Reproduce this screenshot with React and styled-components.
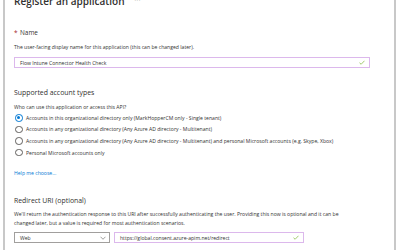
import React from "react";
import styled, { createGlobalStyle } from "styled-components";

const GlobalStyle = createGlobalStyle`
  html, body {
    margin: 0;
    padding: 0;
    background: #fff;
    overflow: hidden;
  }
  body {
    font-family: "Open Sans", "Noto Sans", sans-serif;
    color: #323130;
  }
`;

const Blade = styled.div`
  box-sizing: border-box;
  width: 393px;
  height: 250px;
  margin-left: 3px;
  border-left: 2px solid #c8c8c8;
  border-right: 2px solid #c8c8c8;
  padding-left: 9px;
  overflow: hidden;
`;

const TitleRow = styled.div`
  display: flex;
  align-items: center;
  gap: 10px;
  height: 12px;
  margin-top: -5px;
`;

const Title = styled.h1`
  margin: 0;
  font-size: 10px;
  line-height: 12px;
  font-weight: 600;
  color: #323130;
`;

const More = styled.span`
  font-size: 6px;
  color: #8a8886;
  letter-spacing: 0.5px;
  margin-top: -3px;
`;

const FieldLabel = styled.div`
  margin-top: 22px;
  font-size: 6.4px;
  line-height: 8px;
  font-weight: 400;
  color: #323130;
`;

const Required = styled.span`
  color: #a4262c;
  margin-right: 2.5px;
`;

const Help = styled.div`
  margin-top: ${(p) => p.$top || 0}px;
  font-size: 5.1px;
  line-height: ${(p) => p.$lh || 8}px;
  color: #323130;
  white-space: nowrap;
`;

const Input = styled.div`
  box-sizing: border-box;
  display: flex;
  align-items: center;
  justify-content: space-between;
  width: ${(p) => p.$width}px;
  height: 11px;
  margin-top: ${(p) => p.$top || 0}px;
  padding: 0 4px 0 5px;
  border: 1px solid #dcb8ec;
  font-size: 5.1px;
  color: #323130;
`;

const SectionTitle = styled.h2`
  margin: ${(p) => p.$top}px 0 0;
  font-size: 6.9px;
  line-height: 9px;
  font-weight: 400;
  color: #323130;
`;

const RadioList = styled.div`
  display: flex;
  flex-direction: column;
  margin-top: 1px;
`;

const RadioRow = styled.label`
  display: flex;
  align-items: center;
  gap: 3.5px;
  height: 11.6px;
  padding-left: 1px;
  font-size: 5.1px;
  color: #323130;
  white-space: nowrap;
`;

const RadioCircle = styled.span`
  box-sizing: border-box;
  flex: none;
  display: flex;
  align-items: center;
  justify-content: center;
  width: 7.5px;
  height: 7.5px;
  border-radius: 50%;
  border: 0.8px solid ${(p) => (p.$checked ? "#0078d4" : "#605e5c")};
  &::after {
    content: "";
    width: 3.4px;
    height: 3.4px;
    border-radius: 50%;
    background: ${(p) => (p.$checked ? "#0078d4" : "transparent")};
  }
`;

const Link = styled.a`
  display: block;
  margin-top: 11px;
  font-size: 5.1px;
  line-height: 8px;
  color: #0078d4;
  text-decoration: none;
`;

const UriRow = styled.div`
  display: flex;
  gap: 4px;
  margin-top: 4.5px;
`;

const Select = styled.div`
  box-sizing: border-box;
  display: flex;
  align-items: center;
  justify-content: space-between;
  width: 96px;
  height: 11px;
  padding: 0 3px 0 5px;
  border: 1px solid #a19f9d;
  font-size: 5.1px;
  color: #323130;
`;

const Check = () => (
  <svg width="6" height="5" viewBox="0 0 12 10">
    <path d="M1 5.5 L4.3 8.5 L11 1.5" fill="none" stroke="#8cbf4d" strokeWidth="1.6" />
  </svg>
);

const Chevron = () => (
  <svg width="6" height="4" viewBox="0 0 12 8">
    <path d="M1 1.5 L6 6.5 L11 1.5" fill="none" stroke="#605e5c" strokeWidth="1.2" />
  </svg>
);

const accountTypes = [
  "Accounts in this organizational directory only (MarkHopperCM only - Single tenant)",
  "Accounts in any organizational directory (Any Azure AD directory - Multitenant)",
  "Accounts in any organizational directory (Any Azure AD directory - Multitenant) and personal Microsoft accounts (e.g. Skype, Xbox)",
  "Personal Microsoft accounts only",
];

export default function App() {
  return (
    <>
      <GlobalStyle />
      <Blade>
        <TitleRow>
          <Title>Register an application</Title>
          <More>···</More>
        </TitleRow>

        <FieldLabel>
          <Required>*</Required>Name
        </FieldLabel>
        <Help $top={6}>
          The user-facing display name for this application (this can be changed later).
        </Help>
        <Input $width={356} $top={6}>
          <span>Flow Intune Connector Health Check</span>
          <Check />
        </Input>

        <SectionTitle $top={19.5}>Supported account types</SectionTitle>
        <Help $top={6.5}>Who can use this application or access this API?</Help>
        <RadioList>
          {accountTypes.map((t, i) => (
            <RadioRow key={t}>
              <RadioCircle $checked={i === 0} />
              {t}
            </RadioRow>
          ))}
        </RadioList>
        <Link href="#">Help me choose...</Link>

        <SectionTitle $top={18.5}>Redirect URI (optional)</SectionTitle>
        <Help $top={5} $lh={9}>
          We'll return the authentication response to this URI after successfully authenticating the user. Providing this now is optional and it can be
          <br />
          changed later, but a value is required for most authentication scenarios.
        </Help>
        <UriRow>
          <Select>
            <span>Web</span>
            <Chevron />
          </Select>
          <Input $width={190}>
            <span>https://global.consent.azure-apim.net/redirect</span>
            <Check />
          </Input>
        </UriRow>
      </Blade>
    </>
  );
}
